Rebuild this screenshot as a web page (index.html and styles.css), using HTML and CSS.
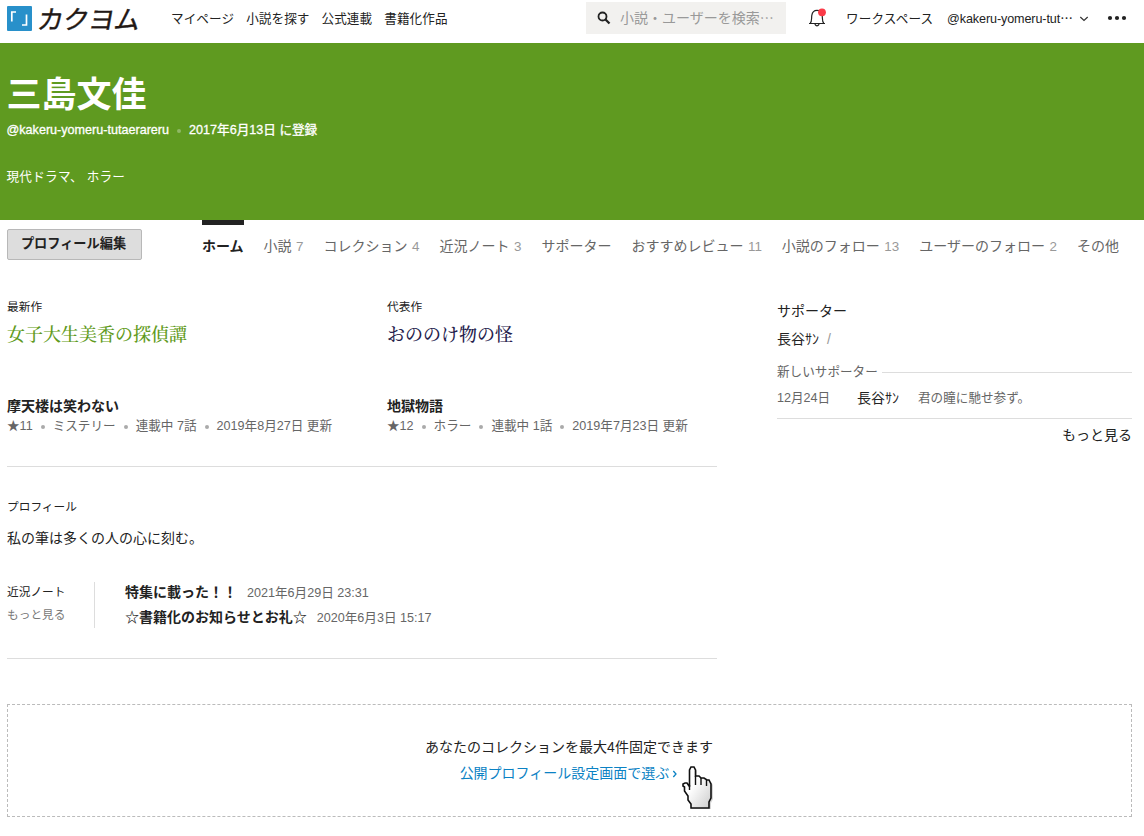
FILE: index.html
```html
<!DOCTYPE html>
<html lang="ja">
<head>
<meta charset="utf-8">
<title>三島文佳 - カクヨム</title>
<link rel="stylesheet" href="styles.css">
</head>
<body>
<header class="header">
  <a class="logo">
    <svg class="logo-mark" width="25" height="25" viewBox="0 0 25 25"><rect width="25" height="25" rx="1" fill="#2890ca"/><path d="M4.800 15.500V6H9M19.500 8.500V19H15" fill="none" stroke="#fff" stroke-width="1.700"/></svg>
    <span class="logo-text"><span>カ</span><span>ク</span><span>ヨ</span><span>ム</span></span>
  </a>
  <nav class="nav"><a>マイページ</a><a>小説を探す</a><a>公式連載</a><a>書籍化作品</a></nav>
  <div class="search">
    <svg width="14" height="14" viewBox="0 0 14 14" fill="none" stroke="#222"><circle cx="5.5" cy="5.5" r="4" stroke-width="1.800"/><path d="M8.5 8.5L12.500 12.500" stroke-width="2.300"/></svg>
    <span>小説・ユーザーを検索<i class="ellipsis">…</i></span>
  </div>
  <svg class="bell" width="18" height="20" viewBox="0 0 18 20"><path d="M1 15.5H17M2.2 15.2C4.2 13.5 3.3 10.5 3.8 7.3C4.3 4.2 6 2.3 9 2.3S13.7 4.2 14.2 7.3C14.7 10.5 13.8 13.5 15.8 15.2M6.8 16.2Q9 19.6 11.2 16.2" fill="none" stroke="#222" stroke-width="1.2"/><circle cx="14" cy="4.3" r="3.9" fill="#fb3b48"/></svg>
  <a class="workspace">ワークスペース</a>
  <a class="account"><span>@kakeru-yomeru-tut<i class="ellipsis">…</i></span><svg width="10" height="6" viewBox="0 0 10 6"><path d="M1.3 1L5 4.5L8.7 1" fill="none" stroke="#333" stroke-width="1.2"/></svg></a>
  <svg class="more" width="20" height="6" viewBox="0 0 20 6" fill="#222"><circle cx="3" cy="3" r="2.1"/><circle cx="10" cy="3" r="2.1"/><circle cx="17" cy="3" r="2.1"/></svg>
</header>
<section class="hero">
  <h1>三島文佳</h1>
  <div class="hero-meta"><span class="handle">@kakeru-yomeru-tutaerareru</span><i class="dot"></i><span class="joined">2017年6月13日 に登録</span></div>
  <p>現代ドラマ、 ホラー</p>
</section>
<div class="tabbar">
  <button class="edit">プロフィール編集</button>
  <nav class="tabs">
    <a class="active">ホーム</a><a>小説<b>7</b></a><a>コレクション<b>4</b></a><a>近況ノート<b>3</b></a><a>サポーター</a><a>おすすめレビュー<b>11</b></a><a>小説のフォロー<b>13</b></a><a>ユーザーのフォロー<b>2</b></a><a>その他</a>
  </nav>
</div>
<main class="content">
  <div class="primary">
    <section class="works">
      <article>
        <h2 class="label">最新作</h2>
        <h3 class="catch green">女子大生美香の探偵譚</h3>
        <h4 class="work-title">摩天楼は笑わない</h4>
        <div class="meta"><span>★11</span><i class="dot"></i><span>ミステリー</span><i class="dot"></i><span>連載中 7話</span><i class="dot"></i><span class="date">2019年8月27日 更新</span></div>
      </article>
      <article>
        <h2 class="label">代表作</h2>
        <h3 class="catch navy">おののけ物の怪</h3>
        <h4 class="work-title">地獄物語</h4>
        <div class="meta"><span>★12</span><i class="dot"></i><span>ホラー</span><i class="dot"></i><span>連載中 1話</span><i class="dot"></i><span class="date">2019年7月23日 更新</span></div>
      </article>
    </section>
    <section class="profile">
      <h2 class="label">プロフィール</h2>
      <p>私の筆は多くの人の心に刻む。</p>
      <div class="notes">
        <div class="notes-head"><span>近況ノート</span><a>もっと見る</a></div>
        <div class="notes-list">
          <div><strong>特集に載った！！</strong><time>2021年6月29日 23:31</time></div>
          <div><strong>☆書籍化のお知らせとお礼☆</strong><time>2020年6月3日 15:17</time></div>
        </div>
      </div>
    </section>
  </div>
  <aside class="supporters">
    <h2>サポーター</h2>
    <p class="names">長谷ｻﾝ<span>/</span></p>
    <div class="recent-head">新しいサポーター</div>
    <div class="recent"><span class="day">12月24日</span><span class="who">長谷ｻﾝ</span><span>君の瞳に馳せ参ず。</span></div>
    <a class="all">もっと見る</a>
  </aside>
</main>
<section class="pin">
  <p>あなたのコレクションを最大4件固定できます</p>
  <a>公開プロフィール設定画面で選ぶ<svg width="6" height="10" viewBox="0 0 6 10"><path d="M1.3 3L4 6L1.3 9" fill="none" stroke="#0b82c4" stroke-width="1.3"/></svg></a>
  <svg class="cursor" width="34" height="46" viewBox="0 0 34 46"><defs><linearGradient id="g" x2="1" y2="1"><stop offset=".4" stop-color="#fff"/><stop offset="1" stop-color="#ccc"/></linearGradient></defs><path d="M8 42V38L5 34V30L2 26V21L1 20V18L3 17H5L7 19H8V4L9 1H12L14 4V11H17L19 13H23L25 15H28L30 18V32L28 36V42Z" fill="#777" opacity=".3" transform="translate(1 1)"/><path d="M9 42V38L6 34V30L2.500 25V21L1 20V18L3 17H5L7 20H7.500V4L9 1H12L13.500 4V10H17L19 12H22L25 14H27L29 18V32L27 36V42Z" fill="url(#g)" stroke="#111" stroke-width="1.600"/><path d="M13.500 10V19M19 12V19M24.500 14V20M7.500 19V24" stroke="#111" stroke-width="1.4"/></svg>
</section>
</body>
</html>
```
FILE: styles.css
```css
* { box-sizing: border-box; }
body, h1, h2, h3, h4, p { margin: 0; }
body {
  width: 1144px;
  height: 836px;
  overflow: hidden;
  background: #fff;
  color: #222;
  font: 14px/20px "Liberation Sans", "Noto Sans CJK JP", sans-serif;
  white-space: nowrap;
}
h2, h3, h4 { font-size: 14px; font-weight: 400; }
.header { display: flex; height: 43px; padding-left: 7px; font-size: 12.6px; }
.logo { display: flex; width: 164px; padding-top: 6px; }
.logo-mark { flex: none; }
.logo-text {
  display: flex;
  margin-left: 5px;
  font: 400 26px/23px "Noto Sans CJK JP", sans-serif;
  color: #221815;
  -webkit-text-stroke: .4px #221815;
  transform: skewX(-10deg);
}
.logo-text span { width: 25.5px; }
.ellipsis { font-family: "Noto Sans CJK JP", sans-serif; font-style: normal; line-height: 1; }
.nav { display: flex; gap: 12px; width: 415px; padding-top: 9px; letter-spacing: .08px; }
.search { display: flex; align-items: center; width: 200px; height: 32px; margin-top: 2px; padding-left: 11px; background: #f2f1ef; color: #999; font-size: 14px; }
.search span { margin-left: 9px; }
.bell { margin: 8px 0 0 22px; }
.workspace { width: 101px; margin-left: 20px; padding-top: 9px; letter-spacing: .15px; }
.account { display: flex; align-items: center; width: 160px; height: 20px; margin-top: 9px; }
.account span { width: 132px; letter-spacing: -.1px; }
.more { margin-top: 15px; }
.hero { height: 177px; padding: 27px 7px 0 6.500px; background: #5f9a20; color: #fff; }
.hero h1 { font-size: 35px; line-height: 50px; }
.hero-meta { display: flex; align-items: center; font-size: 12.6px; -webkit-text-stroke: .3px #fff; }
.hero p { margin-top: 27px; font-size: 12.6px; letter-spacing: .25px; }
.dot { width: 4px; height: 4px; margin: 1px 8px 0; border-radius: 50%; background: #aaa; }
.hero .dot { background: #8fb866; }
.tabbar { display: flex; height: 78px; padding-left: 7px; }
.edit { width: 135px; height: 31px; margin: 9px 60px 0 0; padding: 0 2px 2px 0; border: 1px solid #b8b8b8; border-radius: 2px; background: #ddd; color: #222; font: bold 13.2px/20px "Liberation Sans", "Noto Sans CJK JP", sans-serif; }
.tabs { display: flex; gap: 20px; color: #666; }
.tabs a { height: 36px; padding-top: 16px; }
.tabs b { margin-left: 4.500px; color: #999; font-size: 13.4px; font-weight: 400; }
.tabs .active { border-top: 5px solid #222; padding-top: 11px; color: #222; font-weight: 700; }
.content { display: flex; justify-content: space-between; height: 406px; padding: 0 12px 0 7px; }
.primary { width: 710px; }
.works { display: grid; grid-template-columns: 380px 330px; height: 169px; border-bottom: 1px solid #ddd; }
.label { font-size: 11.7px; }
.works .label { line-height: 18px; }
.catch { margin-top: 5px; font: 500 18px/24px "Noto Serif CJK JP", "Noto Serif JP", "Noto Sans CJK JP", serif; }
.green { color: #5f9a20; }
.navy { color: #25204b; }
.work-title { margin-top: 51px; font-weight: 700; }
.meta { display: flex; align-items: center; color: #666; font-size: 12.6px; }
.profile { height: 192px; padding-top: 30px; border-bottom: 1px solid #ddd; }
.profile p { margin-top: 11px; }
.notes { display: flex; margin-top: 34px; }
.notes-head { display: flex; flex-direction: column; gap: 3px; width: 88px; height: 46px; font-size: 11.7px; border-right: 1px solid #ddd; }
.notes-head a { color: #777; }
.notes-list { display: flex; flex-direction: column; gap: 5px; padding-left: 30px; }
.notes-list div { display: flex; }
.notes-list div + div strong { margin-top: -1px; }
.notes time { margin: 1px 0 0 10px; color: #666; font-size: 12.6px; }
.notes-list div + div time { margin-top: 0; }
.supporters { width: 355px; padding-top: 3px; }
.names { margin-top: 8px; }
.names span { margin-left: 8px; color: #999; }
.recent-head { display: flex; align-items: center; gap: 4px; margin-top: 13px; color: #666; font-size: 12.6px; }
.recent-head::after { flex: 1; height: 1px; margin-top: 1px; background: #ddd; content: ""; }
.recent { display: flex; height: 37px; padding-top: 6px; border-bottom: 1px solid #ddd; color: #666; font-size: 12.6px; }
.day { width: 80px; }
.who { width: 61px; color: #222; font-size: 14px; }
.all { display: block; margin-top: 6px; text-align: right; }
.pin { position: relative; width: 1125px; height: 113px; margin-left: 7px; padding: 32px 1px 0 0; border: 1px dashed #bbb; text-align: center; }
.pin a { display: block; margin-top: 6px; color: #0b82c4; }
.pin a svg { margin-left: 3px; }
.cursor { position: absolute; left: 674px; top: 61px; }
```
